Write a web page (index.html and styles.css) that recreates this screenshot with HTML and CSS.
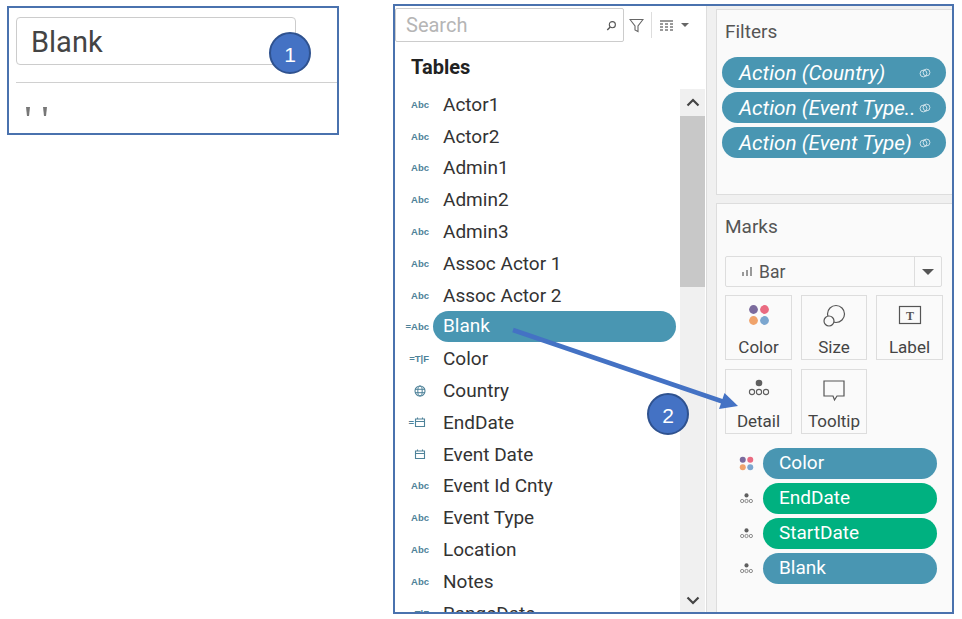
FILE: index.html
```html
<!DOCTYPE html>
<html lang="en">
<head>
    <meta charset="UTF-8">
    <title>Blank field on Detail</title>
    <link rel="stylesheet" href="styles.css">
</head>
<body>
    <svg class="defs" width="0" height="0">
        <symbol id="link" viewBox="0 0 12 12">
            <circle cx="4.5" cy="6.5" r="3.4" fill="none" stroke="currentColor" stroke-width="0.9"/>
            <circle cx="7.5" cy="5.5" r="3.4" fill="none" stroke="currentColor" stroke-width="0.9"/>
        </symbol>
        <symbol id="dots" viewBox="0 0 24 20">
            <circle cx="12" cy="5" r="3.3" fill="#5f5f5f"/>
            <circle cx="5" cy="14" r="2.6" fill="none" stroke="#5f5f5f" stroke-width="1.1"/>
            <circle cx="12" cy="14" r="2.6" fill="none" stroke="#5f5f5f" stroke-width="1.1"/>
            <circle cx="19" cy="14" r="2.6" fill="none" stroke="#5f5f5f" stroke-width="1.1"/>
        </symbol>
        <symbol id="colors" viewBox="0 0 20 20">
            <circle cx="5" cy="5" r="4" fill="#7b6b9d"/>
            <circle cx="15" cy="5" r="4" fill="#ea6b81"/>
            <circle cx="5" cy="15" r="4" fill="#f0a36b"/>
            <circle cx="15" cy="15" r="4" fill="#7ba6cf"/>
        </symbol>
        <symbol id="cal" viewBox="0 0 12 12">
            <path d="M1.5 3h9v7.5h-9zM1.5 5.5h9M3.5 1.5v2M8.5 1.5v2" fill="none" stroke="#4e8299" stroke-width="1.1"/>
        </symbol>
        <symbol id="globe" viewBox="0 0 12 12">
            <circle cx="6" cy="6" r="5" fill="none" stroke="#4e8299" stroke-width="1.1"/>
            <ellipse cx="6" cy="6" rx="2.2" ry="5" fill="none" stroke="#4e8299"/>
            <path d="M1 4.3h10M1 7.7h10" stroke="#4e8299"/>
        </symbol>
    </svg>

    <div class="page">
        <section class="value-card">
            <div class="value-input">Blank</div>
            <div class="value-line"></div>
            <div class="value-quotes"><span></span><span></span></div>
        </section>

        <section class="panel">
            <div class="data">
                <div class="toolbar">
                    <div class="search">
                        <span>Search</span>
                        <svg width="11" height="11" viewBox="0 0 13 13"><circle cx="7.5" cy="5.5" r="3.6" fill="none" stroke="#555" stroke-width="1.3"/><path d="M5 8.2L1.5 11.8" stroke="#555" stroke-width="1.6"/></svg>
                    </div>
                    <svg class="funnel" width="15" height="15" viewBox="0 0 15 15"><path d="M1 1.5h13L9 8v5.5L6 12V8z" fill="none" stroke="#666" stroke-width="1.1"/></svg>
                    <div class="tool-sep"></div>
                    <svg class="columns" width="13" height="11" viewBox="0 0 13 11"><path d="M0 0h13v2H0zM0 3h3v2H0zM5 3h3v2H5zM10 3h3v2h-3zM0 6h3v2H0zM5 6h3v2H5zM10 6h3v2h-3zM0 9h3v2H0zM5 9h3v2H5zM10 9h3v2h-3z" fill="#999"/></svg>
                    <div class="caret small"></div>
                </div>
                <h2 class="tables">Tables</h2>
                <div class="list-wrap">
                    <ul class="fields">
                        <li><span class="kind">Abc</span><span class="name">Actor1</span></li>
                        <li><span class="kind">Abc</span><span class="name">Actor2</span></li>
                        <li><span class="kind">Abc</span><span class="name">Admin1</span></li>
                        <li><span class="kind">Abc</span><span class="name">Admin2</span></li>
                        <li><span class="kind">Abc</span><span class="name">Admin3</span></li>
                        <li><span class="kind">Abc</span><span class="name">Assoc Actor 1</span></li>
                        <li><span class="kind">Abc</span><span class="name">Assoc Actor 2</span></li>
                        <li><span class="kind">=Abc</span><span class="name selected">Blank</span></li>
                        <li><span class="kind">=T|F</span><span class="name">Color</span></li>
                        <li><span class="kind"><svg width="12" height="12"><use href="#globe"/></svg></span><span class="name">Country</span></li>
                        <li><span class="kind">=<svg width="12" height="12"><use href="#cal"/></svg></span><span class="name">EndDate</span></li>
                        <li><span class="kind"><svg width="12" height="12"><use href="#cal"/></svg></span><span class="name">Event Date</span></li>
                        <li><span class="kind">Abc</span><span class="name">Event Id Cnty</span></li>
                        <li><span class="kind">Abc</span><span class="name">Event Type</span></li>
                        <li><span class="kind">Abc</span><span class="name">Location</span></li>
                        <li><span class="kind">Abc</span><span class="name">Notes</span></li>
                        <li><span class="kind">=T|F</span><span class="name">RangeDate</span></li>
                    </ul>
                    <div class="scrollbar">
                        <div class="scroll-btn"><svg width="14" height="9" viewBox="0 0 14 9"><path d="M1.5 7.5L7 2l5.5 5.5" fill="none" stroke="#444" stroke-width="2.2"/></svg></div>
                        <div class="thumb"></div>
                        <div class="scroll-end"><svg width="14" height="9" viewBox="0 0 14 9"><path d="M1.5 1.5L7 7l5.5-5.5" fill="none" stroke="#444" stroke-width="2.2"/></svg></div>
                    </div>
                </div>
            </div>

            <div class="side">
                <div class="shelf filters">
                    <h3>Filters</h3>
                    <div class="pill-stack">
                        <div class="pill filter">Action (Country)<svg width="12" height="12"><use href="#link"/></svg></div>
                        <div class="pill filter">Action (Event Type..<svg width="12" height="12"><use href="#link"/></svg></div>
                        <div class="pill filter">Action (Event Type)<svg width="12" height="12"><use href="#link"/></svg></div>
                    </div>
                </div>
                <div class="shelf marks">
                    <h3>Marks</h3>
                    <div class="mark-type">
                        <svg width="10" height="9" viewBox="0 0 10 9"><path d="M0 5h2v4H0zM4 3h2v6H4zM8 0h2v9H8z" fill="#999"/></svg>
                        <span>Bar</span>
                        <div class="mark-caret"><div class="caret"></div></div>
                    </div>
                    <div class="mark-grid">
                        <div class="mark-btn"><svg width="22" height="22"><use href="#colors"/></svg>Color</div>
                        <div class="mark-btn"><svg width="24" height="24" viewBox="0 0 24 24"><circle cx="14" cy="10" r="8.500" fill="#fafafa" stroke="#555" stroke-width="1.2"/><circle cx="7" cy="17" r="5" fill="#fafafa" stroke="#555" stroke-width="1.2"/></svg>Size</div>
                        <div class="mark-btn"><svg width="24" height="22" viewBox="0 0 24 22"><rect x="1.5" y="2.5" width="21" height="17" fill="none" stroke="#555" stroke-width="1.2"/><text x="12" y="15.5" text-anchor="middle" class="label-t">T</text></svg>Label</div>
                        <div class="mark-btn"><svg width="24" height="20"><use href="#dots"/></svg>Detail</div>
                        <div class="mark-btn"><svg width="24" height="24" viewBox="0 0 24 24"><path d="M2 3h20v15h-7l-2.500 4-1.500-4H2z" fill="none" stroke="#555" stroke-width="1.2"/></svg>Tooltip</div>
                    </div>
                    <div class="encodings">
                        <div class="enc"><svg width="15" height="15"><use href="#colors"/></svg><div class="pill">Color</div></div>
                        <div class="enc"><svg width="15" height="13"><use href="#dots"/></svg><div class="pill green">EndDate</div></div>
                        <div class="enc"><svg width="15" height="13"><use href="#dots"/></svg><div class="pill green">StartDate</div></div>
                        <div class="enc"><svg width="15" height="13"><use href="#dots"/></svg><div class="pill">Blank</div></div>
                    </div>
                </div>
            </div>
        </section>
    </div>

    <!-- annotations drawn over the screenshot -->
    <div class="badge badge-one">1</div>
    <svg class="arrow" width="962" height="619" viewBox="0 0 962 619">
        <path d="M513 330L724 402" stroke="#4472c4" stroke-width="4.500" fill="none"/>
        <path d="M738 406L719 409L724.500 393z" fill="#4472c4"/>
    </svg>
    <div class="badge badge-two">2</div>
</body>
</html>
```
FILE: styles.css
```css
*{
    box-sizing: border-box;
}
body{
    margin: 0;
    width: 962px;
    height: 619px;
    overflow: hidden;
    background-color: white;
    font-family: Roboto, "Liberation Sans", sans-serif;
    color: #333;
}
.defs{
    position: absolute;
}
.page{
    display: flex;
    align-items: flex-start;
    padding: 4px 0 0 7px;
    gap: 54px;
}

/* left card */
.value-card{
    width: 332px;
    height: 129px;
    margin-top: 2px;
    padding: 9px 0 0 7px;
    border: 2px solid #4a72ae;
}
.value-input{
    width: 280px;
    height: 48px;
    padding-left: 14px;
    border: 1px solid #ccc;
    border-radius: 4px;
    font-size: 29px;
    line-height: 48px;
    color: #444;
}
.value-line{
    height: 1px;
    margin-top: 17px;
    background-color: #d0d0d0;
}
.value-quotes{
    display: flex;
    gap: 13px;
    margin: 24px 0 0 10px;
}
.value-quotes span{
    width: 4px;
    height: 9px;
    background-color: #777;
    clip-path: polygon(0 0, 100% 0, 75% 100%, 25% 100%);
}

/* main panel */
.panel{
    display: flex;
    width: 561px;
    height: 610px;
    border: 2px solid #4a72ae;
    overflow: hidden;
}
.data{
    width: 311px;
    flex-shrink: 0;
    height: 100%;
    display: flex;
    flex-direction: column;
}
.toolbar{
    display: flex;
    align-items: center;
    height: 34px;
    margin-top: 2px;
}
.search{
    display: flex;
    align-items: center;
    justify-content: space-between;
    width: 229px;
    height: 34px;
    padding: 0 6px 0 10px;
    border: 1px solid #ccc;
    border-radius: 2px;
    font-size: 20px;
    color: #b5b5b5;
}
.funnel{
    margin-left: 5px;
}
.tool-sep{
    width: 1px;
    height: 26px;
    margin: 0 8px 0 7px;
    background-color: #ddd;
}
.caret{
    width: 0;
    height: 0;
    border-left: 6px solid transparent;
    border-right: 6px solid transparent;
    border-top: 6px solid #555;
}
.caret.small{
    margin-left: 8px;
    border-width: 4px 4px 0;
    border-top-color: #666;
}
.tables{
    margin: 12px 0 0 16px;
    font-size: 20px;
    line-height: 26px;
    font-weight: 700;
    color: #222;
}
.list-wrap{
    display: flex;
    flex: 1;
    min-height: 0;
    margin-top: 9px;
    overflow: hidden;
}
.fields{
    list-style: none;
    margin: 0;
    padding: 0;
    width: 285px;
    flex-shrink: 0;
    height: 525px;
    overflow: hidden;
}
.fields li{
    display: flex;
    align-items: center;
    height: 31.8px;
    padding-bottom: 1px;
}
.kind{
    display: flex;
    align-items: center;
    justify-content: flex-end;
    width: 34px;
    font-family: "Liberation Sans", sans-serif;
    font-size: 9.5px;
    font-weight: 700;
    color: #4e8299;
}
.kind svg{
    margin-right: 3px;
}
.name{
    margin-left: 14px;
    font-size: 19px;
    color: #333;
    white-space: nowrap;
}
.selected{
    width: 243px;
    height: 31px;
    margin-left: 4px;
    padding-left: 10px;
    border-radius: 16px;
    background-color: #4996b2;
    color: white;
    line-height: 30px;
}
.scrollbar{
    display: flex;
    flex-direction: column;
    width: 25px;
    height: 525px;
    flex-shrink: 0;
    background-color: #f0f0f0;
}
.scroll-btn{
    display: flex;
    align-items: center;
    justify-content: center;
    height: 27px;
}
.thumb{
    height: 171px;
    background-color: #c8c8c8;
}
.scroll-end{
    display: flex;
    align-items: center;
    justify-content: center;
    margin-top: auto;
    height: 27px;
}

/* right column */
.side{
    flex: 1;
    display: flex;
    flex-direction: column;
    gap: 8px;
    padding: 3px 0 0 9px;
    background-color: #f0f0f0;
    border-left: 1px solid #ddd;
}
.shelf{
    background-color: #fafafa;
    border: 1px solid #ddd;
    border-right: 0;
}
.shelf h3{
    margin: 0;
    font-size: 19px;
    font-weight: 400;
    line-height: 26px;
    color: #555;
}
.filters{
    height: 186px;
    padding: 9px 0 0 5px;
}
.filters h3{
    margin-left: 3px;
}
.pill-stack{
    display: flex;
    flex-direction: column;
    gap: 4px;
    margin-top: 12px;
}
.pill{
    height: 31px;
    border-radius: 16px;
    background-color: #4996b2;
    color: white;
    font-size: 19px;
    line-height: 30px;
    padding-left: 16px;
}
.pill.green{
    background-color: #00b180;
}
.pill.filter{
    display: flex;
    align-items: center;
    justify-content: space-between;
    width: 224px;
    padding: 0 15px 0 17px;
    font-size: 20.7px;
    font-style: italic;
    white-space: nowrap;
}
.pill.filter svg{
    flex-shrink: 0;
    color: #d8e8ee;
}
.marks{
    flex: 1;
    border-bottom: 0;
    padding: 10px 0 0 8px;
}
.mark-type{
    display: flex;
    align-items: center;
    width: 217px;
    height: 31px;
    margin-top: 16px;
    padding-left: 16px;
    border: 1px solid #ddd;
    border-radius: 2px;
    font-size: 17.5px;
    color: #555;
}
.mark-type span{
    margin-left: 7px;
}
.mark-caret{
    display: flex;
    align-items: center;
    justify-content: center;
    margin-left: auto;
    width: 27px;
    height: 100%;
    border-left: 1px solid #ddd;
}
.mark-grid{
    display: grid;
    grid-template-columns: 67px 66px 67px;
    grid-auto-rows: 65px;
    gap: 9px 9px;
    margin-top: 8px;
}
.mark-btn{
    display: flex;
    flex-direction: column;
    align-items: center;
    justify-content: space-between;
    padding: 8px 0 2px;
    border: 1px solid #ddd;
    font-size: 17px;
    color: #444;
}
.label-t{
    font-family: "Liberation Serif", serif;
    font-size: 12px;
    font-weight: 700;
    fill: #555;
}
.encodings{
    display: flex;
    flex-direction: column;
    gap: 4px;
    margin: 14px 0 0 14px;
}
.enc{
    display: flex;
    align-items: center;
    gap: 9px;
}
.enc .pill{
    width: 174px;
}

/* annotations */
.badge{
    position: absolute;
    width: 42px;
    height: 42px;
    padding-top: 2px;
    border: 2px solid #2f528f;
    border-radius: 50%;
    background-color: #4472c4;
    color: white;
    font-family: "Liberation Sans", sans-serif;
    font-size: 21px;
    line-height: 38px;
    text-align: center;
}
.badge-one{
    left: 269px;
    top: 32px;
}
.badge-two{
    left: 647px;
    top: 393px;
}
.arrow{
    position: absolute;
    left: 0;
    top: 0;
    pointer-events: none;
}
```
